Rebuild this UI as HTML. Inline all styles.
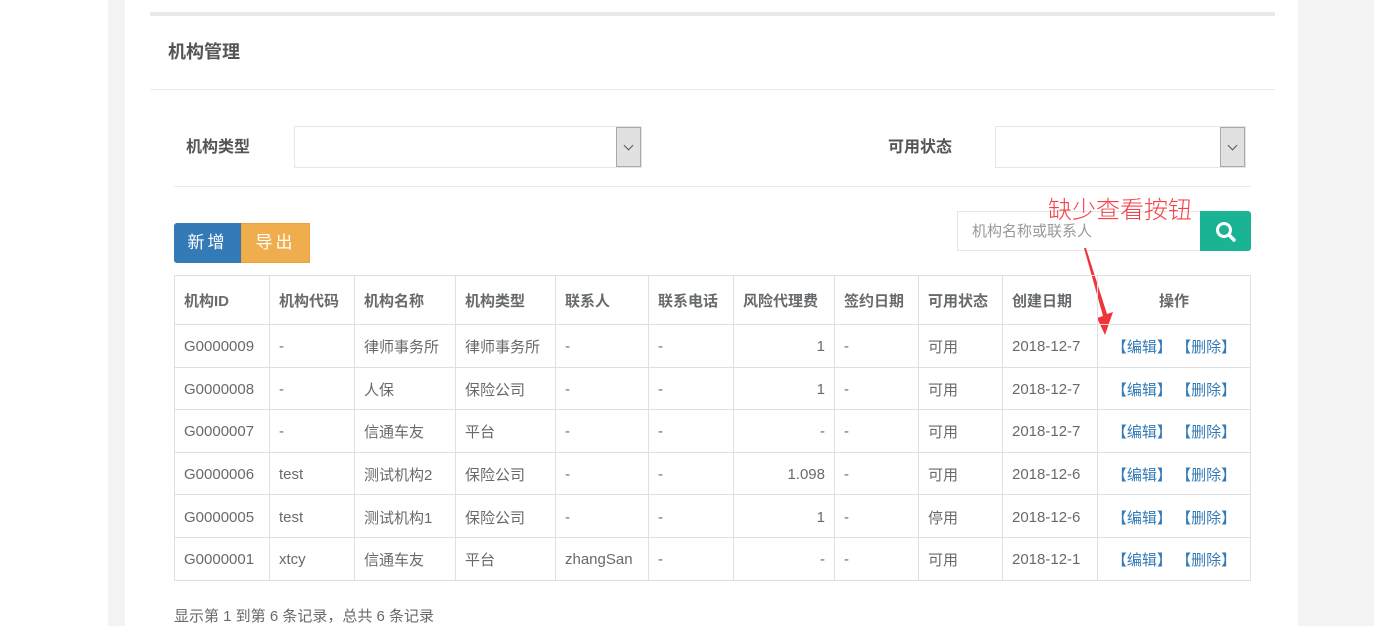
<!DOCTYPE html>
<html><head><meta charset="utf-8"><style>
*{margin:0;padding:0;box-sizing:border-box}
body{width:1374px;height:626px;overflow:hidden;background:#fff;font-family:"Liberation Sans","Noto Sans CJK SC",sans-serif;color:#676a6c;font-size:15px;position:relative}
.g1{position:absolute;left:108px;top:0;width:17px;height:626px;background:#f3f3f4}
.g2{position:absolute;left:1298px;top:0;width:76px;height:626px;background:#f3f3f4}
.abs{position:absolute}
.sel{position:absolute;height:42px;border:1px solid #e5e6e7;background:#fff}
.sel .ar{position:absolute;right:0;top:0;width:25px;height:40px;background:#e1e1e1;border:1px solid #a9a9a9}
.sel .ar:after{content:"";position:absolute;left:8px;top:14px;width:6px;height:6px;border-right:1px solid #555;border-bottom:1px solid #555;transform:rotate(45deg)}
table{position:absolute;left:174px;top:275px;width:1077px;border-collapse:collapse;border:1px solid #ddd;font-size:15px}
td,th{border:1px solid #e0e0e0;padding:0 9px;height:42.6px;text-align:left;white-space:nowrap}
td{padding-top:2px}
th{height:49px;font-weight:bold;color:#676a6c}
td.r{text-align:right}
.op{color:#337ab7;text-align:center}
</style></head><body>
<div class="g1"></div><div class="g2"></div>
<div class="abs" style="left:150px;top:12px;width:1125px;height:4px;background:#e7eaec"></div>
<div class="abs" style="left:168px;top:38px;font-size:18px;font-weight:bold;color:#555">机构管理</div>
<div class="abs" style="left:150px;top:89px;width:1125px;height:1px;background:#e7eaec"></div>
<div class="abs" style="left:186px;top:133px;font-weight:bold;font-size:16px;color:#555">机构类型</div>
<div class="sel" style="left:294px;top:126px;width:348px"><div class="ar"></div></div>
<div class="abs" style="left:888px;top:133px;font-weight:bold;font-size:16px;color:#555">可用状态</div>
<div class="sel" style="left:995px;top:126px;width:251px"><div class="ar"></div></div>
<div class="abs" style="left:174px;top:186px;width:1077px;height:1px;background:#e7eaec"></div>
<div class="abs" style="left:174px;top:223px;width:67px;height:40px;background:#337ab7;color:#fff;border-radius:3px 0 0 3px;font-size:17px;line-height:40px;text-align:center;letter-spacing:3px">新增</div>
<div class="abs" style="left:241px;top:223px;width:69px;height:40px;background:#f0ad4e;color:#fff;border:1px solid #eea236;font-size:17px;line-height:38px;text-align:center;letter-spacing:3px">导出</div>
<div class="abs" style="left:957px;top:211px;width:244px;height:40px;border:1px solid #e5e6e7;color:#999;font-size:15px;line-height:40px;padding-left:14px">机构名称或联系人</div>
<div class="abs" style="left:1200px;top:211px;width:51px;height:40px;background:#1ab394;border-radius:0 3px 3px 0">
<svg width="51" height="40"><circle cx="24" cy="19" r="6.5" fill="none" stroke="#fff" stroke-width="3"/><line x1="29" y1="24" x2="34" y2="29" stroke="#fff" stroke-width="3.5" stroke-linecap="round"/></svg></div>
<div class="abs" style="left:1048px;top:194px;font-size:24px;line-height:28px;color:#f5424a;font-family:'Noto Sans CJK SC','Liberation Sans',sans-serif;font-weight:300">缺少查看按钮</div>
<svg class="abs" style="left:1080px;top:240px" width="50" height="100"><polygon points="4,8 6,8 27,74 33,72 25,95 17,78 23,76" fill="#f0343a"/></svg>
<table>
<tr><th style="width:95px">机构ID</th><th style="width:85px">机构代码</th><th style="width:101px">机构名称</th><th style="width:100px">机构类型</th><th style="width:93px">联系人</th><th style="width:85px">联系电话</th><th style="width:101px">风险代理费</th><th style="width:84px">签约日期</th><th style="width:84px">可用状态</th><th style="width:95px">创建日期</th><th style="text-align:center">操作</th></tr>
<tr><td>G0000009</td><td>-</td><td>律师事务所</td><td>律师事务所</td><td>-</td><td>-</td><td class="r">1</td><td>-</td><td>可用</td><td>2018-12-7</td><td class="op">【编辑】 【删除】</td></tr>
<tr><td>G0000008</td><td>-</td><td>人保</td><td>保险公司</td><td>-</td><td>-</td><td class="r">1</td><td>-</td><td>可用</td><td>2018-12-7</td><td class="op">【编辑】 【删除】</td></tr>
<tr><td>G0000007</td><td>-</td><td>信通车友</td><td>平台</td><td>-</td><td>-</td><td class="r">-</td><td>-</td><td>可用</td><td>2018-12-7</td><td class="op">【编辑】 【删除】</td></tr>
<tr><td>G0000006</td><td>test</td><td>测试机构2</td><td>保险公司</td><td>-</td><td>-</td><td class="r">1.098</td><td>-</td><td>可用</td><td>2018-12-6</td><td class="op">【编辑】 【删除】</td></tr>
<tr><td>G0000005</td><td>test</td><td>测试机构1</td><td>保险公司</td><td>-</td><td>-</td><td class="r">1</td><td>-</td><td>停用</td><td>2018-12-6</td><td class="op">【编辑】 【删除】</td></tr>
<tr><td>G0000001</td><td>xtcy</td><td>信通车友</td><td>平台</td><td>zhangSan</td><td>-</td><td class="r">-</td><td>-</td><td>可用</td><td>2018-12-1</td><td class="op">【编辑】 【删除】</td></tr>
</table>
<div class="abs" style="left:174px;top:605px;font-size:15px">显示第 1 到第 6 条记录，总共 6 条记录</div>
</body></html>
